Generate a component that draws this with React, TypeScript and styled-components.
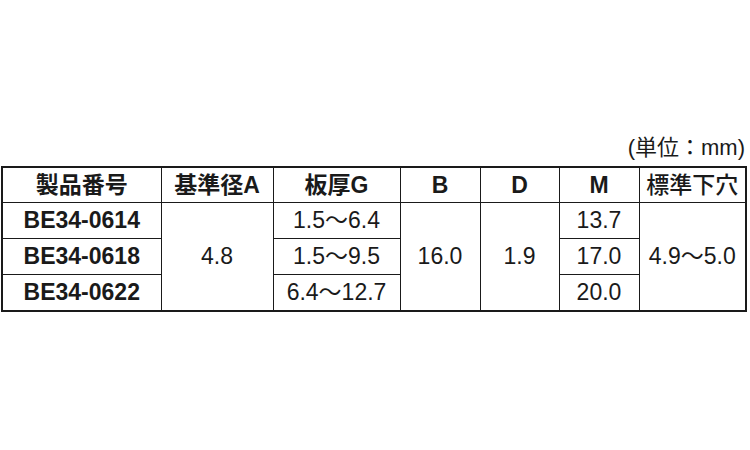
// Dependencies.
import styled, {createGlobalStyle} from 'styled-components'

// Global Style.
const GlobalStyle = createGlobalStyle`
  html, body {
    margin: 0;
    padding: 0;
    background: #fff;
  }
  body {
    font-family: "Liberation Sans", Arial, "Noto Sans CJK JP", sans-serif;
    color: #1a1a1a;
  }
`

// Page.
const Page = styled.div`
  box-sizing: border-box;
  width: 750px;
  height: 450px;
  padding: 134px 5px 0 1px;
  display: flex;
  flex-direction: column;
`

// Unit Note.
const UnitNote = styled.div`
  align-self: flex-end;
  font-family: "Liberation Sans", "Noto Sans CJK JP", sans-serif;
  font-size: 22px;
  line-height: 28px;
  height: 32px;
  margin-right: 0;
`

// Table.
const Table = styled.table`
  border-collapse: collapse;
  table-layout: fixed;
  width: 744px;
  border: 2px solid #1a1a1a;
`

// Cell.
const Cell = styled.td<{$head?: boolean; $bold?: boolean; $medium?: boolean}>`
  border: 1.5px solid #1a1a1a;
  height: ${p => (p.$head ? 34 : 35)}px;
  padding: 0;
  text-align: center;
  vertical-align: middle;
  font-family: "Liberation Sans", Arial, "Noto Sans CJK JP", sans-serif;
  font-size: 23px;
  line-height: 1;
  font-weight: ${p => (p.$bold ? 700 : p.$medium ? 500 : 400)};
  white-space: nowrap;
`

// Data.
const widths = [159, 112, 127, 80, 79, 80, 107]
const rows = [
  {code: 'BE34-0614', g: '1.5〜6.4', m: '13.7'},
  {code: 'BE34-0618', g: '1.5〜9.5', m: '17.0'},
  {code: 'BE34-0622', g: '6.4〜12.7', m: '20.0'},
]

// App.
export default function App() {
  return <>
    <GlobalStyle/>
    <Page>

      {/* Unit. */}
      <UnitNote>(単位：mm)</UnitNote>

      {/* Table. */}
      <Table>
        <colgroup>
          {widths.map((w, i) => <col key={i} style={{width: w}}/>)}
        </colgroup>
        <thead>
          <tr>
            <Cell as="th" $head $bold>製品番号</Cell>
            <Cell as="th" $head $bold>基準径A</Cell>
            <Cell as="th" $head $bold>板厚G</Cell>
            <Cell as="th" $head $bold>B</Cell>
            <Cell as="th" $head $bold>D</Cell>
            <Cell as="th" $head $bold>M</Cell>
            <Cell as="th" $head $medium>標準下穴</Cell>
          </tr>
        </thead>
        <tbody>
          {rows.map((row, i) => <tr key={row.code}>
            <Cell $bold>{row.code}</Cell>
            {i === 0 && <Cell rowSpan={3}>4.8</Cell>}
            <Cell>{row.g}</Cell>
            {i === 0 && <Cell rowSpan={3}>16.0</Cell>}
            {i === 0 && <Cell rowSpan={3}>1.9</Cell>}
            <Cell>{row.m}</Cell>
            {i === 0 && <Cell rowSpan={3}>4.9〜5.0</Cell>}
          </tr>)}
        </tbody>
      </Table>

    </Page>
  </>
}
